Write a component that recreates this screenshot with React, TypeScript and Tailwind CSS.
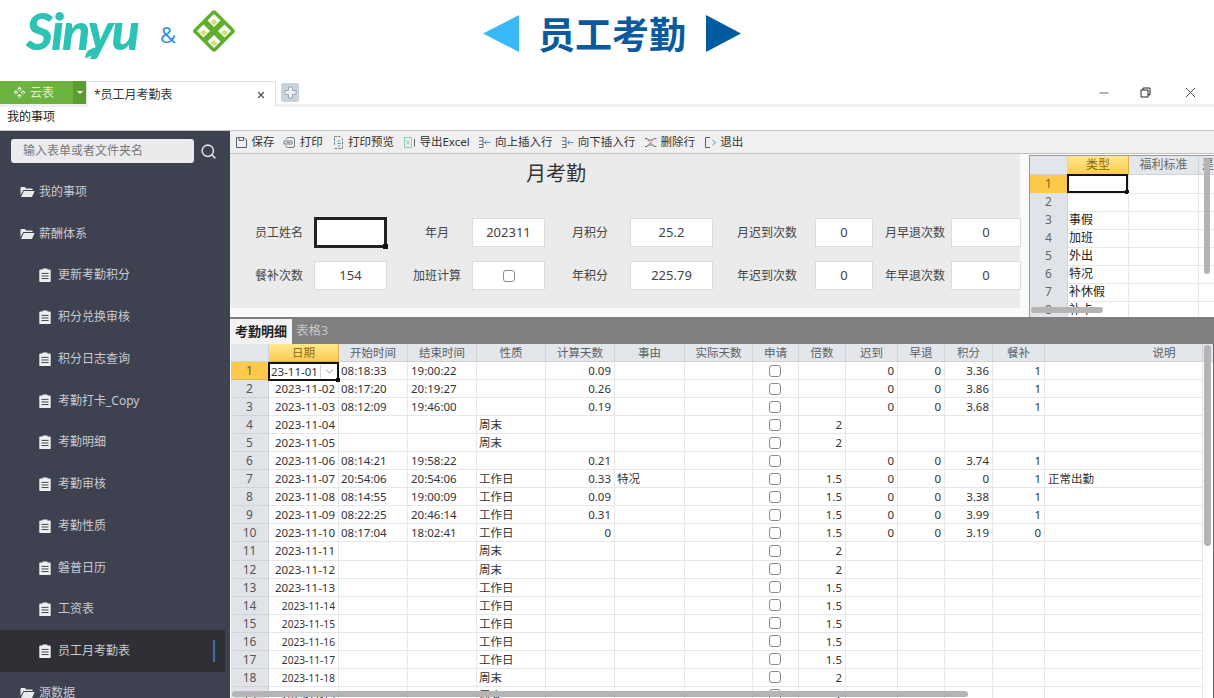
import React from 'react'
import { Search, X, Minus, ChevronDown } from 'lucide-react'

const FONT = '"Noto Sans", "Noto Sans CJK SC", sans-serif'
const CJK = '"Noto Sans CJK SC", sans-serif'

const COLS = 'grid-cols-[38px_70px_69px_69px_69px_69px_70px_68px_46px_47px_52px_47px_48px_52px_158px_11px]'

const HEADERS = ['日期', '开始时间', '结束时间', '性质', '计算天数', '事由', '实际天数', '申请', '倍数', '迟到', '早退', '积分', '餐补', '说明']

type Row = [string, string, string, string, string, string, string, string, string, string, string, string]

const ROWS: Row[] = [
  ['2023-11-01', '08:18:33', '19:00:22', '', '0.09', '', '', '0', '0', '3.36', '1', ''],
  ['2023-11-02', '08:17:20', '20:19:27', '', '0.26', '', '', '0', '0', '3.86', '1', ''],
  ['2023-11-03', '08:12:09', '19:46:00', '', '0.19', '', '', '0', '0', '3.68', '1', ''],
  ['2023-11-04', '', '', '周末', '', '', '2', '', '', '', '', ''],
  ['2023-11-05', '', '', '周末', '', '', '2', '', '', '', '', ''],
  ['2023-11-06', '08:14:21', '19:58:22', '', '0.21', '', '', '0', '0', '3.74', '1', ''],
  ['2023-11-07', '20:54:06', '20:54:06', '工作日', '0.33', '特况', '1.5', '0', '0', '0', '1', '正常出勤'],
  ['2023-11-08', '08:14:55', '19:00:09', '工作日', '0.09', '', '1.5', '0', '0', '3.38', '1', ''],
  ['2023-11-09', '08:22:25', '20:46:14', '工作日', '0.31', '', '1.5', '0', '0', '3.99', '1', ''],
  ['2023-11-10', '08:17:04', '18:02:41', '工作日', '0', '', '1.5', '0', '0', '3.19', '0', ''],
  ['2023-11-11', '', '', '周末', '', '', '2', '', '', '', '', ''],
  ['2023-11-12', '', '', '周末', '', '', '2', '', '', '', '', ''],
  ['2023-11-13', '', '', '工作日', '', '', '1.5', '', '', '', '', ''],
  ['2023-11-14', '', '', '工作日', '', '', '1.5', '', '', '', '', ''],
  ['2023-11-15', '', '', '工作日', '', '', '1.5', '', '', '', '', ''],
  ['2023-11-16', '', '', '工作日', '', '', '1.5', '', '', '', '', ''],
  ['2023-11-17', '', '', '工作日', '', '', '1.5', '', '', '', '', ''],
  ['2023-11-18', '', '', '周末', '', '', '2', '', '', '', '', ''],
  ['2023-11-19', '', '', '周末', '', '', '2', '', '', '', '', ''],
]

const MENU = [
  { name: '我的事项', folder: true },
  { name: '薪酬体系', folder: true },
  { name: '更新考勤积分' },
  { name: '积分兑换审核' },
  { name: '积分日志查询' },
  { name: '考勤打卡_Copy' },
  { name: '考勤明细' },
  { name: '考勤审核' },
  { name: '考勤性质' },
  { name: '磐普日历' },
  { name: '工资表' },
  { name: '员工月考勤表', active: true },
  { name: '源数据', folder: true },
]

function LogoMark({ size, mono }: { size: number; mono?: boolean }) {
  const core = mono ? '#6db33f' : '#d3e170'
  const bg = mono ? 'none' : '#5fae2c'
  return (
    <svg width={size} height={size} viewBox="0 0 44 44">
      <rect x="6.5" y="6.5" width="31" height="31" rx="3" transform="rotate(45 22 22)" fill={bg} />
      {[[22, 11.5], [11.5, 22], [32.5, 22], [22, 32.5]].map(([x, y]) => (
        <g key={`${x}-${y}`}>
          <path d={`M${x} ${y - 6.5} L${x + 6.5} ${y} L${x} ${y + 6.5} L${x - 6.5} ${y} Z`} fill="#ffffff" />
          <path d={`M${x} ${y - 1.5} L${x + 3.5} ${y + 1.5} L${x} ${y + 5} L${x - 3.5} ${y + 1.5} Z`} fill={core} />
        </g>
      ))}
    </svg>
  )
}

function FolderIcon() {
  return (
    <svg width="15" height="12" viewBox="0 0 15 12" className="shrink-0">
      <path d="M0.5 2 Q0.5 1 1.5 1 H5 L6.2 2.4 H12 Q12.6 2.4 12.6 3 V4 H3.4 L0.5 9 Z" fill="#e9eaec" />
      <path d="M3.8 5 H14.6 L12 11 H1 Z" fill="#e9eaec" />
    </svg>
  )
}

function DocIcon() {
  return (
    <svg width="12" height="14" viewBox="0 0 11 13" className="shrink-0">
      <path d="M1 1.4 H3.3 V0.4 H7.7 V1.4 H10 Q10.8 1.4 10.8 2.2 V12.2 Q10.8 13 10 13 H1 Q0.2 13 0.2 12.2 V2.2 Q0.2 1.4 1 1.4 Z" fill="#f0f0f1" />
      <path d="M2.2 5 H8.8 M2.2 7.4 H8.8 M2.2 9.8 H8.8" stroke="#3e4150" strokeWidth="0.9" />
    </svg>
  )
}

function ToolIcon({ kind }: { kind: string }) {
  const dark = '#55606b'
  const blue = '#3a9fd8'
  return (
    <svg width="13" height="13" viewBox="0 0 13 13" fill="none" className="shrink-0">
      {kind === 'save' && <path d="M1.5 1.5 H9 L11.5 4 V11.5 H1.5 Z M4 1.5 V4.5 H8.5 V1.5" stroke={dark} />}
      {kind === 'print' && (
        <path d="M3 3.5 Q3.5 1.5 5 1.5 H10 Q11.5 1.5 11.5 3.5 V9.5 Q11.5 11.5 10 11.5 H5 Q3 11.5 2.5 9.5 M1 5 H9 V8 H1 Z M4 6.5 H7" stroke={dark} strokeWidth="0.8" />
      )}
      {kind === 'preview' && (
        <>
          <path d="M2.5 9 V0.5 H8 L10.5 3 V12.5 H2.5" stroke={dark} strokeWidth="0.8" strokeDasharray="3 1" />
          <path d="M5.5 5 H8 M5.5 7.5 H9 M6 10 H8" stroke={blue} />
        </>
      )}
      {kind === 'excel' && (
        <>
          <path d="M1.5 1.5 H8.5 V11.5 H1.5 Z M3.5 4.5 L6.5 8.5 M6.5 4.5 L3.5 8.5" stroke="#6cc3a0" strokeWidth="0.8" />
          <path d="M11.5 3 V10.5" stroke={dark} />
        </>
      )}
      {kind === 'up' && (
        <>
          <path d="M1 1.5 H5 V5 H1 M5 5 V8.5 H1 M5 8.5 V11.5 H1" stroke={dark} strokeWidth="0.9" />
          <path d="M12.5 6.5 H6.5 M8.5 4.5 L6.5 6.5 L8.5 8.5" stroke={blue} />
        </>
      )}
      {kind === 'down' && (
        <>
          <path d="M1 1.5 H5 V5 H1 M5 5 V8.5 H1 M5 8.5 V11.5 H1" stroke={dark} strokeWidth="0.9" />
          <path d="M6.5 6.5 H12.5 M8.5 4.5 L6.5 6.5 L8.5 8.5" stroke={blue} />
        </>
      )}
      {kind === 'del' && (
        <>
          <path d="M1 2.5 H3 L4 4 H9 L10 2.5 H12.5 M1 10.5 H3 L4 9 H9 L10 10.5 H12.5" stroke={dark} strokeWidth="0.9" />
          <path d="M4.5 5 L8.5 8.5 M8.5 5 L4.5 8.5" stroke="#e0705a" strokeWidth="0.9" />
        </>
      )}
      {kind === 'exit' && (
        <>
          <path d="M6 1.5 H1.5 V11.5 H6" stroke={dark} />
          <path d="M8.5 4 L11.5 6.5 L8.5 9" stroke={blue} />
        </>
      )}
    </svg>
  )
}

function Checkbox() {
  return <span className="block w-[12px] h-[12px] rounded-[3px] border border-[#8a8a8a] bg-white" />
}

function Field({ value, active, check }: { value?: string; active?: boolean; check?: boolean }) {
  if (active) {
    return (
      <div className="relative h-[31px] -my-px border-[3px] border-[#222] bg-white">
        <span className="absolute -right-[4px] -bottom-[4px] w-[5px] h-[5px] bg-[#111]" />
      </div>
    )
  }
  return (
    <div className="h-[29px] flex items-center justify-center bg-white border border-[#dcdcdc] text-[13px] text-[#444]">
      {check ? <Checkbox /> : value}
    </div>
  )
}

function Label({ text, pad }: { text: string; pad: string }) {
  return <div className={`text-center text-[12px] text-[#444] whitespace-nowrap ${pad}`}>{text}</div>
}

function MainForm() {
  return (
    <div className="w-[790px] h-[154px] bg-[#ebebeb] flex flex-col">
      <div className="text-center text-[20px] text-[#333] leading-[28px] mt-[6px] pr-[138px]">月考勤</div>
      <div className="mt-[30px] grid grid-cols-[84px_73px_85px_73px_85px_83px_102px_58px_78px_70px] grid-rows-[29px_29px] gap-y-[14px] items-center">
        <Label text="员工姓名" pad="pl-[14px]" />
        <Field active />
        <Label text="年月" pad="pl-[15px]" />
        <Field value="202311" />
        <Label text="月积分" pad="pl-[5px]" />
        <Field value="25.2" />
        <Label text="月迟到次数" pad="pl-[6px]" />
        <Field value="0" />
        <Label text="月早退次数" pad="pl-[6px]" />
        <Field value="0" />
        <Label text="餐补次数" pad="pl-[14px]" />
        <Field value="154" />
        <Label text="加班计算" pad="pl-[15px]" />
        <Field check />
        <Label text="年积分" pad="pl-[5px]" />
        <Field value="225.79" />
        <Label text="年迟到次数" pad="pl-[6px]" />
        <Field value="0" />
        <Label text="年早退次数" pad="pl-[6px]" />
        <Field value="0" />
      </div>
    </div>
  )
}

function SideGrid() {
  const types = ['', '', '事假', '加班', '外出', '特况', '补休假', '补卡']
  return (
    <div className="relative ml-[9px] mt-px w-[185px] h-[162px] border-t border-l border-[#9a9a9a] overflow-hidden bg-white">
      <div className="grid grid-cols-[38px_61px_70px_15px] grid-rows-[19px] text-[12px] text-[#666]">
        <div className="bg-[#e3e6ea] border-r border-b border-[#cfd3d7]" />
        <div className="bg-gradient-to-b from-[#ffe88e] to-[#fccb4e] flex items-center justify-center border-r border-b border-[#d8b04a] text-[#8a6a10]">类型</div>
        <div className="bg-[#e3e6ea] flex items-center justify-center border-r border-b border-[#cfd3d7]">福利标准</div>
        <div className="bg-[#e3e6ea] pl-[3px] border-b border-[#cfd3d7] overflow-hidden whitespace-nowrap">是否</div>
      </div>
      {types.map((t, i) => (
        <div key={i} className="grid grid-cols-[38px_61px_70px_15px] h-[18px] text-[12px] leading-[18px]">
          <div className={`text-center border-r border-b text-[#666] ${i === 0 ? 'bg-[#fcc94a] border-[#e5b54a] text-[#80660f]' : 'bg-[#e0e4e8] border-[#d0d4d8]'}`}>{i + 1}</div>
          <div className="pl-px border-r border-b border-[#e6e8ea] text-[#222] relative">
            {i === 0 && (
              <span className="absolute -left-px -top-px w-[61px] h-[19px] border-2 border-[#111]">
                <span className="absolute -right-[3px] -bottom-[3px] w-[4px] h-[4px] bg-[#111]" />
              </span>
            )}
            {t}
          </div>
          <div className="border-r border-b border-[#e6e8ea]" />
          <div className="border-b border-[#e6e8ea]" />
        </div>
      ))}
      <span className="absolute left-[174px] top-[2px] w-[6px] h-[116px] rounded-sm bg-[#b4b4b4]" />
      <span className="absolute left-[1px] top-[151px] w-[72px] h-[6px] rounded-sm bg-[#b4b4b4]" />
    </div>
  )
}

function Cell({ children, align, cls }: { children?: React.ReactNode; align?: string; cls?: string }) {
  return (
    <div className={`h-[18.06px] leading-[18px] border-r border-b border-[#e6e7e9] px-[3px] overflow-hidden whitespace-nowrap text-[#333] ${align || ''} ${cls || 'text-[11.5px]'}`}>
      {children}
    </div>
  )
}

function DetailGrid() {
  return (
    <div className="relative flex-1 overflow-hidden bg-white pl-px border-r border-[#666]" style={{ fontFamily: FONT }}>
      <div className={`grid ${COLS} h-[18px] text-[11.5px] text-[#5a6068]`}>
        <div className="bg-[#e3e6ea] border-r border-b border-[#cfd3d7]" />
        {HEADERS.map((h, i) => (
          <div
            key={h}
            className={`flex items-center justify-center border-r border-b ${
              i === 0
                ? 'bg-gradient-to-b from-[#ffe88e] to-[#fccb4e] border-[#d8b04a] text-[#8a6a10]'
                : 'bg-[#e3e6ea] border-[#cfd3d7]'
            } ${i === 13 ? 'pl-[81px]' : ''}`}
          >
            {h}
          </div>
        ))}
        <div className="bg-[#e3e6ea] border-b border-[#cfd3d7]" />
      </div>
      {ROWS.map((r, i) => {
        const small = i >= 13
        return (
          <div key={r[0]} className={`grid ${COLS}`}>
            <div className={`h-[18.06px] leading-[18px] text-center text-[12px] border-r border-b ${i === 0 ? 'bg-[#fcc94a] border-[#e5b54a] text-[#7a6210]' : 'bg-[#e0e4e8] border-[#d0d4d8] text-[#555]'}`}>
              {i + 1}
            </div>
            {i === 0 ? (
              <div className="relative h-[19px] border-2 border-[#111] -mb-px -ml-px flex items-center justify-between pl-[1px] pr-[1px] bg-white text-[11.5px] text-[#333] leading-none">
                23-11-01
                <span className="flex items-center h-[13px] pl-[2px] border-l border-[#d0d0d0]">
                  <ChevronDown size={13} strokeWidth={1.2} color="#666" />
                </span>
                <span className="absolute -right-[3px] -bottom-[3px] w-[4px] h-[4px] bg-[#111]" />
              </div>
            ) : (
              <Cell align="text-right" cls={small ? 'text-[10.2px]' : 'text-[11.5px]'}>{r[0]}</Cell>
            )}
            <Cell cls="text-[11.5px] pl-[2px]">{r[1]}</Cell>
            <Cell>{r[2]}</Cell>
            <Cell cls="text-[11.5px] pl-[2px]">{r[3]}</Cell>
            <Cell align="text-right">{r[4]}</Cell>
            <Cell cls="text-[11.5px] pl-[2px]">{r[5]}</Cell>
            <Cell />
            <div className="h-[18.06px] border-r border-b border-[#e6e7e9] flex items-center justify-center pr-[2px]">
              <Checkbox />
            </div>
            <Cell align="text-right">{r[6]}</Cell>
            <Cell align="text-right">{r[7]}</Cell>
            <Cell align="text-right">{r[8]}</Cell>
            <Cell align="text-right">{r[9]}</Cell>
            <Cell align="text-right">{r[10]}</Cell>
            <Cell>{r[11]}</Cell>
            <div />
          </div>
        )
      })}
      <span className="absolute left-[974px] top-[1px] w-[7px] h-[201px] rounded-sm bg-[#b4b4b4]" />
      <span className="absolute left-[2px] bottom-[1px] w-[736px] h-[6px] rounded-sm bg-[#b4b4b4]" />
    </div>
  )
}

export default function App() {
  return (
    <div className="w-[1214px] h-[698px] overflow-hidden bg-white flex flex-col" style={{ fontFamily: FONT }}>
      {/* slide header */}
      <div className="h-[81px] shrink-0 flex items-start relative">
        <div className="relative ml-[26px] mt-[1px] w-[134px] h-[58px] shrink-0">
          <span
            className="block text-[52px] leading-[58px] italic font-black text-[#2cc3b5] tracking-[-2px]"
            style={{ fontFamily: 'Lato, sans-serif' }}
          >
            Sinyu
          </span>
          <svg className="absolute left-[58px] top-[44px]" width="17" height="14" viewBox="0 0 17 14">
            <path d="M16 0 Q15 8 8 10.5 Q4 12 1 13.5 Q1 6 8 3.5 Q13 2 16 0 Z" fill="#2cc3b5" />
          </svg>
        </div>
        <span className="mt-[20px] text-[22px] leading-[28px] text-[#2a90e2]" style={{ fontFamily: '"Open Sans", sans-serif' }}>&amp;</span>
        <div className="ml-[16px] mt-[9px]">
          <LogoMark size={44} />
        </div>
        <div className="ml-[247px] mt-[15px] flex items-center">
          <svg width="36" height="37" viewBox="0 0 36 37"><path d="M36 0 V37 L0 18.5 Z" fill="#38b8f6" /></svg>
          <span className="ml-[19px] text-[37px] leading-[37px] font-bold text-[#0b5a9f]" style={{ fontFamily: CJK }}>员工考勤</span>
          <svg className="ml-[20px]" width="35" height="37" viewBox="0 0 35 37"><path d="M0 0 V37 L35 18.5 Z" fill="#005a9e" /></svg>
        </div>
      </div>

      {/* tab bar */}
      <div className="h-[23px] shrink-0 flex items-stretch relative border-b-[3px] border-[#f0f0f0] box-content">
        <div className="w-[73px] bg-[#6db33f] flex items-center pl-[12px] gap-[3px] text-[12px] text-[#dfeed3]">
          <LogoMark size={15} mono />
          云表
        </div>
        <div className="w-[13px] bg-[#5a9d30] flex items-center justify-center">
          <span className="w-0 h-0 border-x-[3px] border-x-transparent border-t-[3px] border-t-white" />
        </div>
        <div className="w-[190px] bg-white border border-b-0 border-[#dcdfe3] rounded-t-[2px] flex items-center justify-between pl-[7px] pr-[9px] text-[12px] text-[#333] -mb-[3px]">
          *员工月考勤表
          <X size={10} strokeWidth={3} color="#555" />
        </div>
        <div className="ml-[5px] mt-[2px] w-[18px] h-[19px] rounded-[2px] bg-[#c9d3dc] flex items-center justify-center">
          <svg width="13" height="13" viewBox="0 0 13 13"><path d="M4.5 1 H8.5 V4.5 H12 V8.5 H8.5 V12 H4.5 V8.5 H1 V4.5 H4.5 Z" fill="#eef1f4" stroke="#8e9aa5" strokeWidth="0.8" /></svg>
        </div>
        <div className="ml-auto flex items-center h-[23px] pr-[15px] text-[#333]">
          <Minus size={14} strokeWidth={1.3} />
          <svg className="ml-[29px]" width="11" height="11" viewBox="0 0 11 11" fill="none" stroke="#222"><path d="M1 3 H8 V10 H1 Z M3 3 V1 H10 V8 H8" /></svg>
          <X className="ml-[31px]" size={17} strokeWidth={1.2} />
        </div>
      </div>

      <div className="h-[23px] shrink-0 pl-[7px] text-[12px] leading-[20px] text-[#222] border-b border-[#c6c6c6] box-content">我的事项</div>

      {/* body */}
      <div className="flex-1 flex min-h-0">
        <aside className="w-[230px] shrink-0 bg-[#3e4150] overflow-hidden">
          <div className="flex items-center pt-[8px] pl-[11px]">
            <div className="w-[183px] h-[24px] rounded-[3px] bg-[#ebebed] pl-[12px] text-[12px] leading-[23px] text-[#777]">输入表单或者文件夹名</div>
            <Search className="ml-[6px]" size={17} strokeWidth={2.2} color="#dfe0e2" />
          </div>
          <div className="mt-[8px]">
            {MENU.map((m) => (
              <div
                key={m.name}
                className={`relative h-[41.75px] w-[225px] flex items-center text-[12px] ${m.folder ? 'pl-[20px] gap-[4px]' : 'pl-[39px] gap-[7px]'} ${m.active ? 'bg-[#2f3036]' : ''} text-[#c9cbd0]`}
              >
                {m.folder ? <FolderIcon /> : <DocIcon />}
                {m.name}
                {m.active && <span className="absolute left-[213px] top-[10px] w-[2px] h-[22px] bg-[#3a6ea8]" />}
              </div>
            ))}
          </div>
        </aside>

        <main className="flex-1 min-w-0 flex flex-col">
          <div className="h-[23px] shrink-0 bg-[#f0f0f0] border-b border-[#c2c2c2] flex items-center pl-[5px] gap-[8.8px] text-[11.5px] text-[#333]">
            {[
              ['save', '保存'],
              ['print', '打印'],
              ['preview', '打印预览'],
              ['excel', '导出Excel'],
              ['up', '向上插入行'],
              ['down', '向下插入行'],
              ['del', '删除行'],
              ['exit', '退出'],
            ].map(([k, t]) => (
              <span key={k} className="flex items-center gap-[3.5px] whitespace-nowrap">
                <ToolIcon kind={k} />
                {t}
              </span>
            ))}
          </div>
          <div className="h-[163px] shrink-0 flex bg-[#fafafa]">
            <MainForm />
            <SideGrid />
          </div>
          <div className="h-[27px] shrink-0 bg-[#7f7f7f] flex items-end">
            <div className="h-[25px] w-[62px] bg-[#f2f2f2] font-bold text-[13px] text-[#222] text-center leading-[24px]">考勤明细</div>
            <div className="h-[25px] pl-[4px] text-[12.5px] text-[#c8c8c8] leading-[24px]">表格3</div>
          </div>
          <DetailGrid />
        </main>
      </div>
    </div>
  )
}
